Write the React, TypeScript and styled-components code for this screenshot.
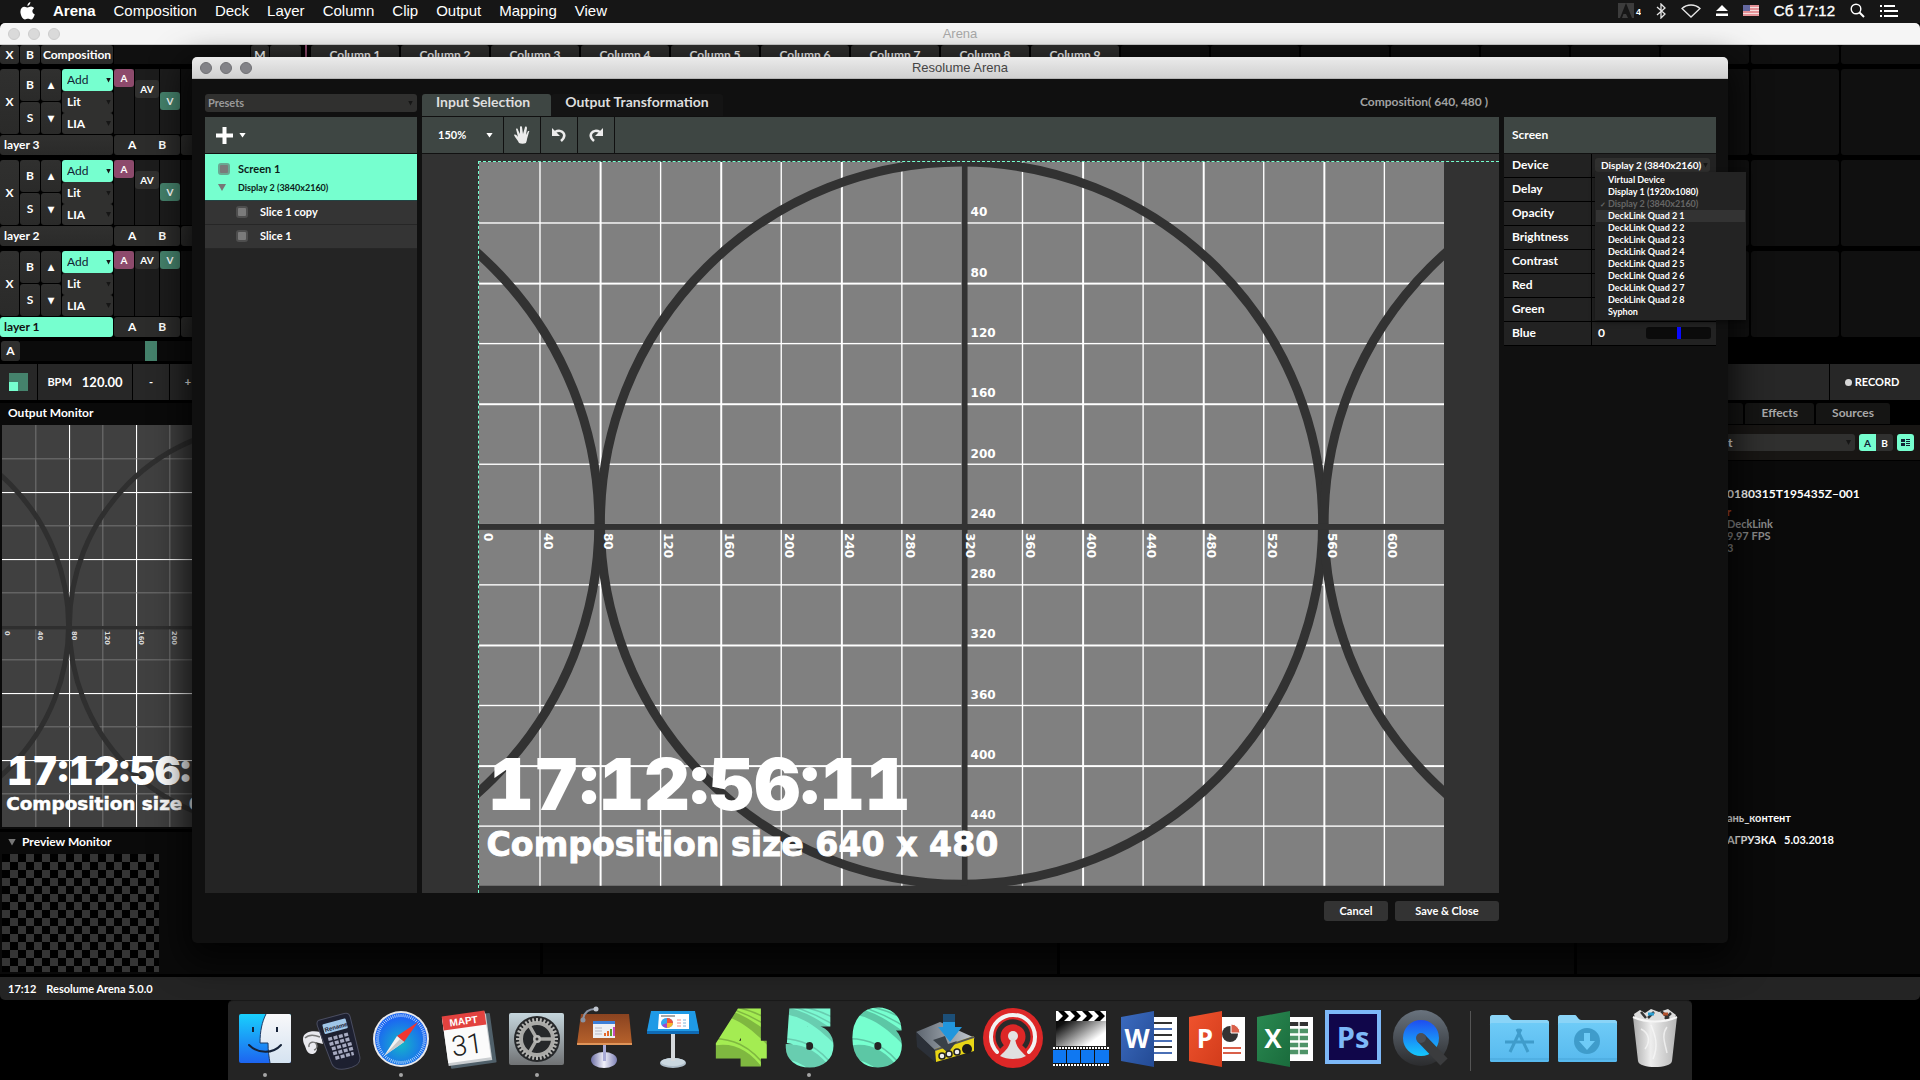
import React from "react";
import styled, { createGlobalStyle, css } from "styled-components";

const MINT = "#76ffcf";
const TEAL = "#45826c";
const PURPLE = "#8d4a6c";
const UI = `Lato, "Open Sans", "Noto Sans", sans-serif`;
const SYSTEM = `"Liberation Sans", Arial, sans-serif`;

const GlobalStyle = createGlobalStyle`
  * { box-sizing: border-box; }
  body { margin: 0; background: #000; }
  button, select, input { font: inherit; color: inherit; margin: 0; }
  ul { list-style: none; margin: 0; padding: 0; }
`;

/* ---------- desktop ---------- */

const Desktop = styled.div`
  position: relative;
  display: flex;
  flex-direction: column;
  height: 100vh;
  overflow: hidden;
  background: #000;
  color: #fff;
  font: 700 12px/16px ${UI};
  white-space: nowrap;
`;

const MenuBar = styled.nav`
  display: flex;
  align-items: center;
  justify-content: space-between;
  flex: none;
  height: 23px;
  padding: 0 22px 2px 20px;
  background: #161616;
  font: 400 15px/18px ${SYSTEM};
`;

const MenuGroup = styled.div<{ $gap: number }>`
  display: flex;
  align-items: center;
  gap: ${(p) => p.$gap}px;
`;

const MenuItem = styled.button<{ $bold?: boolean }>`
  padding: 0;
  border: 0;
  background: none;
  font-weight: ${(p) => (p.$bold ? 700 : 400)};
  line-height: 18px;
`;

const Clock = styled.span`
  font-size: 15px;
  -webkit-text-stroke: 0.4px #fff;
`;

const AppWindow = styled.section`
  display: flex;
  flex: 1;
  flex-direction: column;
  min-height: 0;
  overflow: hidden;
  border-radius: 5px;
  background: #000;
`;

const TitleBar = styled.header<{ $active?: boolean }>`
  display: grid;
  grid-template-columns: 1fr auto 1fr;
  align-items: center;
  flex: none;
  height: 22px;
  padding: 0 8px;
  border-bottom: 1px solid ${(p) => (p.$active ? "#b4b4b4" : "#cfcfcf")};
  background: ${(p) => (p.$active ? "linear-gradient(#ebebeb, #d0d0d0)" : "#f5f5f5")};
  color: ${(p) => (p.$active ? "#454545" : "#ababab")};
  font: 400 13px/18px ${SYSTEM};
`;

const Lights = styled.div`
  display: flex;
  gap: 8px;
`;

const Light = styled.button<{ $active?: boolean }>`
  width: 12px;
  height: 12px;
  padding: 0;
  border: 1px solid ${(p) => (p.$active ? "#707074" : "#cccccc")};
  border-radius: 50%;
  background: ${(p) => (p.$active ? "#838388" : "#dadada")};
`;

/* ---------- deck ---------- */

const Deck = styled.div`
  display: flex;
  flex: none;
  flex-direction: column;
  gap: 5px;
`;

const DeckRow = styled.div<{ $tall?: boolean }>`
  display: grid;
  grid-template-columns: 301px 10px minmax(0, 1fr);
  height: ${(p) => (p.$tall ? 86 : 19)}px;
`;

const PurpleRule = styled.div`
  width: 2px;
  margin-left: 4px;
  background: ${PURPLE};
`;

const ClipRow = styled.div`
  display: flex;
  gap: 2px;
  overflow: hidden;
`;

const ClipCell = styled.div<{ $head?: boolean }>`
  flex: none;
  width: 88px;
  border-radius: 3px;
  background: ${(p) => (p.$head ? "#30302f" : "#101010")};
  line-height: 19px;
  text-align: center;
`;

const HeadTools = styled.div`
  display: grid;
  grid-template-columns: 19px 20px 72px 136px 18px 31px;
  gap: 1px;
  background: #000;
`;

const flatButton = css`
  padding: 0;
  border: 0;
  border-radius: 3px;
  background: linear-gradient(#30302f, #2a2a29);
  line-height: 16px;
`;

const Key = styled.button<{ $left?: boolean; $on?: boolean }>`
  ${flatButton}
  padding-left: ${(p) => (p.$left ? 4 : 0)}px;
  text-align: ${(p) => (p.$left ? "left" : "center")};
  ${(p) => p.$on && css`background: ${MINT}; color: #111;`}
`;

const Blank = styled.div`
  background: #101010;
`;

const Layer = styled.div`
  display: grid;
  grid-template-rows: 65px 20px;
  gap: 1px;
`;

const LayerTop = styled.div`
  display: grid;
  grid-template-columns: 19px 20px 20px 51px 20px 24px 20px 1fr;
  gap: 1px;
  padding-right: 1px;
`;

const Stack = styled.div`
  display: grid;
  grid-auto-rows: 1fr;
  gap: 1px;
`;

const Blend = styled.div`
  display: grid;
  grid-template-rows: 22px 22px 21px;
`;

const SelectBox = styled.div<{ $tone?: "mint" | "grey" | "none" }>`
  display: grid;
  align-items: center;
  min-width: 0;
  border-radius: 3px;
  background: ${(p) => (p.$tone === "mint" ? MINT : "#30302f")};
  color: ${(p) => (p.$tone === "mint" ? "#123" : p.$tone === "grey" ? "#9a9a9a" : "#fff")};
  font-weight: ${(p) => (p.$tone === "mint" ? 400 : 700)};

  > * { grid-area: 1 / 1; }
`;

const Select = styled.select<{ $pad: number; $size?: number }>`
  width: 100%;
  height: 100%;
  padding: 0 0 0 ${(p) => p.$pad}px;
  border: 0;
  background: none;
  appearance: none;
  font-size: ${(p) => p.$size ?? 12}px;
  line-height: 14px;
`;

const Caret = styled.span<{ $light?: boolean; $edge?: number }>`
  justify-self: end;
  width: ${(p) => (p.$light ? 7 : 5)}px;
  height: 5px;
  margin-right: ${(p) => p.$edge ?? 2}px;
  background: ${(p) => (p.$light ? "#fff" : "#161616")};
  clip-path: polygon(0 0, 100% 0, 50% 100%);
  pointer-events: none;
`;

const Fader = styled.div<{ $drop: number }>`
  display: flex;
  flex-direction: column;
  padding-top: ${(p) => p.$drop}px;
  background: #1c1c1c;
`;

const Knob = styled.button<{ $color: string }>`
  height: 18px;
  padding: 0;
  border: 0;
  border-radius: 3px;
  background: ${(p) => p.$color};
  font-size: 10px;
`;

const LayerFoot = styled.div`
  display: grid;
  grid-template-columns: 113px 66px 1fr;
  gap: 1px;
`;

const CrossPair = styled.div`
  display: flex;
  justify-content: center;
  gap: 22px;
  border-radius: 3px;
  background: #2c2c2b;
`;

const PlainButton = styled.button`
  padding: 0;
  border: 0;
  background: none;
`;

const CrossRow = styled.div`
  display: grid;
  grid-template-columns: 19px 281px;
  height: 20px;
  margin: 4px 0 3px 1px;
`;

const CrossTrack = styled.div`
  padding-left: 125px;
  background: #0b0b0b;
`;

const CrossThumb = styled.div`
  width: 12px;
  height: 100%;
  background: ${TEAL};
`;

const Transport = styled.div`
  display: grid;
  grid-template-columns: 37px 94px 36px 36px 1fr 90px;
  gap: 1px;
  flex: none;
  height: 36px;
  margin-bottom: 3px;
`;

const TransportCell = styled.button`
  display: flex;
  align-items: center;
  justify-content: center;
  gap: 10px;
  padding: 0;
  border: 0;
  background: #272727;
  font-size: 11px;
`;

const BeatMark = styled.span`
  display: flex;
  align-items: flex-end;
  width: 19px;
  height: 18px;
  background: ${TEAL};

  &::before {
    content: "";
    width: 9px;
    height: 9px;
    background: ${MINT};
  }
`;

const Tempo = styled.span`
  font-size: 13px;
`;

const RecordLabel = styled.span`
  display: flex;
  align-items: center;
  gap: 3px;
  padding-right: 6px;

  &::before {
    content: "";
    width: 7px;
    height: 7px;
    border-radius: 50%;
    background: #d6d6d6;
  }
`;

/* ---------- lower panels ---------- */

const Lower = styled.div`
  display: grid;
  grid-template-columns: 540px 1fr 1fr 343px;
  gap: 3px;
  flex: 1;
  min-height: 0;
  margin-bottom: 3px;
`;

const Column = styled.div`
  display: flex;
  flex-direction: column;
  min-width: 0;
`;

const Panel = styled.section<{ $grow?: boolean }>`
  display: flex;
  flex-direction: column;
  flex: ${(p) => (p.$grow ? 1 : "none")};
  min-height: 0;
  margin-bottom: ${(p) => (p.$grow ? 0 : 3)}px;
  padding: 0 2px 2px;
  background: #0a0a0a;
`;

const PanelTitle = styled.h2`
  display: flex;
  align-items: center;
  gap: 6px;
  height: 22px;
  margin: 0;
  padding: 0 0 2px 6px;
  font-size: 12px;
`;

const Disclosure = styled.span`
  width: 8px;
  height: 7px;
  background: #777;
  clip-path: polygon(0 0, 100% 0, 50% 100%);
`;

const Checker = styled.div`
  width: 157px;
  height: 118px;
  background: conic-gradient(#353535 25%, #000 0 50%, #353535 0 75%, #000 0) 0 0 / 16px 16px;
`;

const Tabs = styled.div`
  display: flex;
  justify-content: flex-end;
  gap: 2px;
  height: 21px;
  margin-bottom: 1px;
  padding-right: 30px;
`;

const BrowserTab = styled.button<{ $hot?: boolean }>`
  padding: 0 ${(p) => (p.$hot ? 20 : 16)}px 1px;
  border: 0;
  border-radius: 3px 3px 0 0;
  background: #151514;
  color: ${(p) => (p.$hot ? "#c4502a" : "#a8a8a8")};
`;

const BrowserBar = styled.div`
  display: flex;
  align-items: center;
  gap: 4px;
  height: 36px;
  padding: 0 6px;
  border-bottom: 1px solid #000;
  background: #181614;
`;

const BrowserSelect = styled(SelectBox)`
  flex: 1;
  height: 17px;
`;

const Toggle = styled.div`
  display: flex;
  overflow: hidden;
  height: 17px;
  border-radius: 3px;
`;

const ToggleButton = styled.button<{ $on?: boolean }>`
  display: grid;
  place-items: center;
  width: 17px;
  padding: 0;
  border: 0;
  background: ${(p) => (p.$on ? MINT : "#30302f")};
  color: ${(p) => (p.$on ? "#123" : "#fff")};
  font-size: 10px;
`;

const FileList = styled.ul`
  display: flex;
  flex: 1;
  flex-direction: column;
  padding: 25px 0 0 150px;
  background: #0a0a0a;
`;

const FileName = styled.li`
  margin-bottom: 4px;
  font-size: 12px;
  line-height: 16px;
`;

const FileMeta = styled.li<{ $hot?: boolean }>`
  color: ${(p) => (p.$hot ? "#c4502a" : "#8a8a8a")};
  font-size: 11px;
  line-height: 12px;
`;

const FileGroup = styled.li`
  display: flex;
  flex-direction: column;
  gap: 6px;
  margin-top: 256px;
  font-size: 11px;
  line-height: 16px;
`;

const FileRow = styled.span`
  display: flex;
  gap: 8px;
`;

const StatusBar = styled.footer`
  display: flex;
  align-items: center;
  gap: 10px;
  flex: none;
  height: 23px;
  padding-left: 8px;
  background: #242424;
  font-size: 11px;
`;

/* ---------- output dialog ---------- */

const Dialog = styled.section`
  position: absolute;
  top: 57px;
  right: 10%;
  bottom: 137px;
  left: 10%;
  display: flex;
  flex-direction: column;
  border-radius: 5px;
  background: #101010;
  box-shadow: 0 12px 34px 6px rgba(0, 0, 0, 0.75);

  > header { border-radius: 5px 5px 0 0; }
`;

const DialogGrid = styled.div<{ $main?: boolean }>`
  display: grid;
  grid-template-columns: 212px minmax(0, 1fr) 212px;
  gap: 5px;
  flex: ${(p) => (p.$main ? 1 : "none")};
  min-height: 0;
  padding: ${(p) => (p.$main ? "15px 12px 0 13px" : "8px 12px 22px 13px")};
`;

const PresetBox = styled(SelectBox)`
  height: 18px;
  margin-bottom: 5px;
`;

const Toolbar = styled.div`
  display: flex;
  align-items: center;
  gap: 1px;
  flex: none;
  height: 37px;
  border-bottom: 1px solid #111;
  background: #3e4643;
`;

const ToolCell = styled.div<{ $width: number }>`
  display: grid;
  flex: none;
  width: ${(p) => p.$width}px;
  height: 36px;
  box-shadow: 1px 0 #101010;
`;

const ToolButton = styled.button`
  display: grid;
  place-items: center;
  padding: 0;
  border: 0;
  background: none;
`;

const AddButton = styled.button`
  display: flex;
  align-items: center;
  gap: 6px;
  padding: 0 0 0 11px;
  border: 0;
  background: none;
`;

const ZoomBox = styled(SelectBox)`
  background: none;
`;

const Tree = styled.div`
  flex: 1;
  background: #242424;
`;

const ScreenItem = styled.div`
  display: grid;
  grid-template-columns: 12px 1fr;
  align-items: center;
  column-gap: 8px;
  height: 47px;
  padding: 5px 13px 3px;
  border-bottom: 1px solid #244;
  background: ${MINT};
  color: #0c1c18;
  font-size: 11px;
`;

const SmallText = styled.span`
  font-size: 9px;
`;

const SliceItem = styled.div`
  display: flex;
  align-items: center;
  gap: 12px;
  height: 24px;
  padding: 0 0 2px 31px;
  border-bottom: 1px solid #262626;
  background: #343434;
  font-size: 11px;
`;

const Tick = styled.input`
  width: 12px;
  height: 12px;
  border: 2px solid #4e4e4e;
  border-radius: 3px;
  background: #7a7a7a;
  appearance: none;

  ${ScreenItem} & { border-color: #6aa892; }
`;

const DialogTabs = styled.div`
  display: flex;
  height: 23px;
  font-size: 14px;
`;

const DialogTab = styled.button<{ $on?: boolean }>`
  height: 22px;
  padding: 0 ${(p) => (p.$on ? 21 : 14)}px 6px 14px;
  border: 0;
  border-radius: 3px 3px 0 0;
  background: ${(p) => (p.$on ? "#3e4643" : "#141414")};
  color: #dedede;
`;

const SizeNote = styled.span`
  margin-left: auto;
  padding-right: 11px;
  color: #a2a2a2;
  font-size: 12px;
  line-height: 16px;
`;

const Canvas = styled.div`
  flex: 1;
  display: flex;
  min-height: 0;
  overflow: hidden;
  padding: 7px 0 0 56px;
  background: #323232;
`;

const Stage = styled.div`
  flex: 1;
  padding-right: 55px;
  border-top: 1px dashed ${MINT};
  border-left: 1px dashed ${MINT};
`;

const CardSvg = styled.svg`
  display: block;
  width: 100%;
  height: auto;
`;

const Timecode = styled.text`
  font-family: Inter, sans-serif;
  font-size: 47px;
  font-weight: 900;
  font-variant-numeric: tabular-nums;
`;

const Properties = styled.div`
  display: flex;
  flex-direction: column;
  padding-top: 23px;
`;

const PropertyTitle = styled.h2`
  margin: 0;
  padding-left: 8px;
  font-size: 12px;
`;

const PropertyRow = styled.div`
  display: grid;
  grid-template-columns: 87px 1fr;
  gap: 1px;
  height: 24px;
  border-bottom: 1px solid #000;
  background: #000;
`;

const PropertyLabel = styled.label`
  padding-left: 8px;
  background: #222;
  line-height: 21px;
`;

const PropertyValue = styled.div`
  position: relative;
  display: flex;
  align-items: center;
  justify-content: space-between;
  padding: 0 5px 1px 6px;
  background: #222;
`;

const DeviceBox = styled(SelectBox)`
  flex: 1;
  height: 14px;
  margin: 0 1px 0 -3px;
`;

const Popup = styled.ul`
  position: absolute;
  z-index: 2;
  top: 18px;
  left: 3px;
  width: 151px;
  padding: 2px 1px;
  background: #232323;
  box-shadow: 0 2px 5px rgba(0, 0, 0, 0.5);
`;

const Option = styled.li<{ $state?: "off" | "hover" }>`
  display: grid;
  grid-template-columns: 12px 1fr;
  height: 12px;
  background: ${(p) => (p.$state === "hover" ? "#333" : "none")};
  color: ${(p) => (p.$state === "off" ? "#666" : "#fff")};
  font-size: 9px;
  line-height: 12px;

  &::before {
    content: "${(p) => (p.$state === "off" ? "✓" : "")}";
    padding-left: 4px;
    font-size: 7px;
  }
`;

const Slider = styled.input`
  width: 65px;
  height: 12px;
  border-radius: 3px;
  background: #0b0b0b;
  appearance: none;

  &::-webkit-slider-thumb {
    width: 4px;
    height: 12px;
    background: #0a0aff;
    appearance: none;
  }
`;

const FooterButtons = styled.div`
  display: flex;
  grid-column: 2;
  justify-content: flex-end;
  gap: 7px;
`;

const FooterButton = styled.button<{ $wide?: boolean }>`
  ${flatButton}
  width: ${(p) => (p.$wide ? 104 : 64)}px;
  height: 20px;
  background: #333;
  font-size: 11px;
`;

/* ---------- dock ---------- */

const DockArea = styled.div`
  display: flex;
  flex: none;
  justify-content: center;
  height: 80px;
`;

const DockBar = styled.div`
  display: flex;
  padding: 4px 3px 0;
  border-top: 1px solid #1a1a1a;
  border-radius: 5px 5px 0 0;
  background: #242424;
`;

const DockItem = styled.button<{ $running?: boolean }>`
  display: flex;
  flex-direction: column;
  align-items: center;
  width: 68px;
  padding: 0;
  border: 0;
  background: none;

  > svg { flex: none; overflow: visible; }

  &::after {
    content: "";
    width: 4px;
    height: 4px;
    margin-top: 2px;
    border-radius: 50%;
    background: ${(p) => (p.$running ? "#a5a5a5" : "none")};
  }
`;

const DockRule = styled.div`
  width: 1px;
  height: 60px;
  margin: 6px 14px 0 15px;
  background: #555;
`;

/* ---------- test card ---------- */

function TestCard({ dim, label }: { dim?: boolean; label: string }) {
  const ink = dim ? "#2f2f2f" : "#323232";
  const xs = Array.from({ length: 15 }, (_, i) => (i + 1) * 40);
  const ys = Array.from({ length: 11 }, (_, i) => (i + 1) * 40);
  const line = (v: number) => (dim && v % 80 ? "#868686" : "#fff");
  return (
    <CardSvg viewBox="0 0 640 480" role="img" aria-label={label} fill="#fff" fontFamily="DejaVu Sans, sans-serif" fontWeight={700}>
      <rect width="640" height="480" fill={dim ? "#404040" : "#808080"} />
      {xs.map((x) => <rect key={x} x={x} width={x % 80 ? 0.9 : 1.3} height="480" fill={line(x)} />)}
      {ys.map((y) => <rect key={y} y={y} width="640" height={y % 80 ? 0.9 : 1.3} fill={line(y)} />)}
      <g fill="none" stroke={ink} strokeWidth="6">
        <circle cx="320" cy="239.5" r="239.5" />
        <circle cx="-160" cy="239.5" r="239.5" />
        <circle cx="800" cy="239.5" r="239.5" />
      </g>
      <rect y="240" width="640" height="4" fill={ink} />
      <rect x="320" width="4" height="480" fill={ink} />
      <g fontSize="8" fill={dim ? "#ddd" : "#fff"}>
        {ys.map((y) => <text key={y} x="326" y={y - 4}>{y}</text>)}
        {[0, ...xs].map((x) => (
          <text key={x} transform={`translate(${x + 3} 246) rotate(90)`}>{x}</text>
        ))}
      </g>
      <Timecode x="6" y="430">17:12:56:11</Timecode>
      <text x="5" y="460" fontSize="22" stroke="#fff" strokeWidth=".6">Composition size 640 x 480</text>
    </CardSvg>
  );
}

/* ---------- dock icons ---------- */

const icon = (body: React.ReactNode) => (
  <svg width="68" height="66" viewBox="0 0 68 66">{body}</svg>
);

const tickMarks = (n: number, r1: number, r2: number, cx: number, cy: number) =>
  Array.from({ length: n }, (_, i) => {
    const a = (i * 2 * Math.PI) / n;
    return `M${cx + r1 * Math.cos(a)} ${cy + r1 * Math.sin(a)}L${cx + r2 * Math.cos(a)} ${cy + r2 * Math.sin(a)}`;
  }).join("");

const finder = icon(
  <>
    <defs>
      <linearGradient id="fL" x2="0" y2="1"><stop stopColor="#19d0fd" /><stop offset="1" stopColor="#1d64f0" /></linearGradient>
      <linearGradient id="fR" x2="0" y2="1"><stop stopColor="#f8f8fa" /><stop offset="1" stopColor="#d5e3f1" /></linearGradient>
    </defs>
    <rect x="8" y="9" width="52" height="49" rx="2" fill="url(#fL)" />
    <path d="M35 9h23a2 2 0 0 1 2 2v45a2 2 0 0 1-2 2H39c-1-6-2-12-2-20h-8c0-12 2-21 6-29z" fill="url(#fR)" />
    <path d="M35 9c-4 8-6 17-6 29h8c0 8 1 14 2 20" fill="none" stroke="#1c3a66" strokeWidth="1" />
    <path d="M22 22v5M46 22v5" stroke="#152238" strokeWidth="2" />
    <path d="M18 40c9 9 24 9 32 0" fill="none" stroke="#152238" strokeWidth="2" strokeLinecap="round" />
  </>
);

const calculator = icon(
  <>
    <path d="M4 34c0-7 9-9 17-7l3 12-8-2c3 4 3 11-2 12-6 1-7-6-8-8-1-2-2-4-2-7z" fill="#e9e9ee" />
    <path d="M6 33c4-4 10-3 15-1M10 42a4 4 0 1 1 5 3" fill="none" stroke="#777" strokeWidth="1.5" />
    <g transform="rotate(-15 39 36)">
      <path d="M26 11h26c4 0 5 2 5 5l-1 40c0 7-5 9-14 9s-14-3-15-9l-4-40c0-3 1-5 3-5z" fill="#1d2030" stroke="#4a4d60" />
      <rect x="28" y="16" width="24" height="10" rx="1" fill="#9fc6e8" />
      <text x="29" y="24" fontFamily="Liberation Sans" fontSize="6" fill="#223">Rename</text>
      <path d="M30 32h22M30 37h22M31 42h21M31 47h21M32 52h19" stroke="#a6aac0" strokeWidth="3.4" strokeDasharray="4 1.5" />
    </g>
  </>
);

const safari = icon(
  <>
    <defs><radialGradient id="sf" cy=".6"><stop stopColor="#14b5c9" /><stop offset="1" stopColor="#1c66f2" /></radialGradient></defs>
    <circle cx="34" cy="34" r="28" fill="#e8e8ea" />
    <circle cx="34" cy="34" r="26" fill="url(#sf)" />
    <path d={tickMarks(72, 22, 25, 34, 34)} stroke="#cfe6ff" strokeWidth=".8" />
    <path d="M51 17L30 31l7 6z" fill="#f0362f" />
    <path d="M17 51l13-20 7 6z" fill="#f2f2f2" />
    <path d="M17 51l16-17 4 3z" fill="#c9c9c9" />
  </>
);

const calendar = icon(
  <g transform="rotate(-8 34 33)">
    <rect x="12" y="11" width="46" height="50" rx="1" fill="#50606a" />
    <rect x="10" y="11" width="44" height="47" fill="#c9cdd0" />
    <rect x="10" y="9" width="43" height="46" fill="#fbfbfb" />
    <rect x="10" y="8" width="43" height="14" fill="#e2423f" />
    <text x="31" y="19" textAnchor="middle" fontFamily="Liberation Sans" fontSize="10" fill="#fff">МАРТ</text>
    <text x="31" y="49" textAnchor="middle" fontFamily="Roboto, sans-serif" fontWeight="300" fontSize="28" fill="#222">31</text>
  </g>
);

const settings = icon(
  <>
    <defs><linearGradient id="st" x2="0" y2="1"><stop stopColor="#c5d6dd" /><stop offset="1" stopColor="#707274" /></linearGradient></defs>
    <rect x="6" y="8" width="55" height="52" rx="2" fill="url(#st)" />
    <circle cx="34" cy="34" r="23" fill="#26282a" />
    <circle cx="34" cy="34" r="16" fill="none" stroke="#a9a9a6" strokeWidth="4" />
    <path d={tickMarks(32, 17, 21, 34, 34)} stroke="#b5b5b2" strokeWidth="2" />
    <path d="M34 34L26 20M34 34h17M34 34L26 48" stroke="#a9a9a6" strokeWidth="3.5" />
    <circle cx="34" cy="34" r="4" fill="#b9b9b6" />
    <circle cx="34" cy="34" r="1.5" fill="#333" />
  </>
);

const lectern = icon(
  <>
    <defs>
      <linearGradient id="wd" x2="0" y2="1"><stop stopColor="#8a4320" /><stop offset="1" stopColor="#b7622c" /></linearGradient>
      <linearGradient id="bs"><stop stopColor="#6d6fa5" /><stop offset=".5" stopColor="#f2f2fb" /><stop offset="1" stopColor="#7d80b5" /></linearGradient>
    </defs>
    <ellipse cx="33" cy="55" rx="13" ry="8" fill="url(#bs)" />
    <path d="M32 40h3v16h-3z" fill="#a9abd8" />
    <path d="M10 9h48l3 30H6z" fill="url(#wd)" />
    <path d="M6 38h55v2H6z" fill="#e0955a" />
    <path d="M22 16h22v17H22z" fill="#eef0f4" /><path d="M22 16h22v3H22z" fill="#3d7fd8" />
    <path d="M24 23h7M24 26h7M24 29h7" stroke="#b9b9c4" />
    <path d="M34 31v-3M37 31v-5" stroke="#e66a2c" strokeWidth="2" />
    <path d="M40 31v-7" stroke="#5aa02c" strokeWidth="2" />
    <path d="M43 31v-9" stroke="#c54bb8" strokeWidth="2" />
    <path d="M12 15C13 7 18 4 24 4" fill="none" stroke="#8a93a3" strokeWidth="2" />
    <circle cx="12" cy="15" r="2.5" fill="#8a93a3" /><circle cx="25" cy="4" r="2.5" fill="#c0c6d0" />
  </>
);

const podium = icon(
  <>
    <ellipse cx="34" cy="58" rx="13" ry="5" fill="#aebdc9" /><ellipse cx="34" cy="57" rx="12" ry="4" fill="#cbd8e0" />
    <path d="M32 28h4v28h-4z" fill="#d5d9dc" />
    <path d="M12 6h44l4 20H8z" fill="#1f9ae6" /><path d="M8 26h52v3H8z" fill="#0f6bb5" />
    <path d="M20 9h30v15H19z" fill="#fff" />
    <path d="M22 11h14" stroke="#555" />
    <ellipse cx="28" cy="18" rx="6" ry="5" fill="#34a8ef" /><path d="M28 18v-5a6 5 0 0 1 6 5z" fill="#f0523d" /><path d="M28 18h6a6 5 0 0 1-6 5z" fill="#f7b52c" /><path d="M28 18v5a6 5 0 0 1-5-3z" fill="#a548c8" />
    <path d="M38 15h4M38 18h4M38 21h4" stroke="#f08a8a" /><path d="M44 15h3M44 18h3M44 21h3" stroke="#7fb4dd" />
  </>
);

const Numeral = ({ n, a, b }: { n: string; a: string; b: string }) =>
  icon(
    <>
      <defs>
        <pattern id={`num${n}`} width="68" height="66" patternUnits="userSpaceOnUse">
          <rect width="68" height="66" fill={a} />
          <path d="M0 8c26 2 40 10 68 40v-16C44 14 28 4 0 0zM0 42c24-6 40 0 58 24H36C24 56 12 52 0 56z" fill={b} />
          <path d="M12 0c20 5 36 12 56 26M20 0c18 3 32 8 48 18M0 34c24-2 44 6 62 32" fill="none" stroke={b} strokeWidth="1.4" />
        </pattern>
      </defs>
      <text x="34" y="58" textAnchor="middle" fontFamily="Inter, sans-serif" fontWeight="900" fontSize="70" fill={`url(#num${n})`} stroke={`url(#num${n})`} strokeWidth="7">{n}</text>
    </>
  );

const drive = icon(
  <>
    <defs><linearGradient id="dr"><stop stopColor="#5d656f" /><stop offset="1" stopColor="#c4cbd2" /></linearGradient></defs>
    <path d="M5 27l24-10 35 16-40 13z" fill="url(#dr)" /><path d="M5 27l19 18v12L6 42z" fill="#2b3038" />
    <path d="M24 44l39-13v15L25 57z" fill="#e8d516" /><path d="M24 44l39-13v2L24 46z" fill="#555" />
    <path d="M22 35l12-4 3 8 9-3-9 12z" fill="#3a4148" />
    <g fill="#eee" stroke="#222" strokeWidth="1.5"><circle cx="31" cy="51" r="3" /><circle cx="38" cy="49" r="3" /><circle cx="46" cy="47" r="3" /></g>
    <circle cx="56" cy="44" r="5" fill="#1b1b1b" />
    <path d="M32 9h12v13h7L39 37 27 22h5z" fill="#2196dd" /><path d="M32 9h12v8H32z" fill="#1c4f78" />
  </>
);

const broadcast = icon(
  <>
    <circle cx="34" cy="33" r="30" fill="#dd2727" />
    <path d="M18 47a22 22 0 1 1 32 0" fill="none" stroke="#f2f2f2" strokeWidth="4" strokeLinecap="round" />
    <path d="M23 42a15 15 0 1 1 22 0" fill="none" stroke="#2b2b2b" strokeWidth="5" />
    <circle cx="34" cy="33" r="9" fill="#dd2727" /><circle cx="34" cy="31" r="5" fill="#e4e4e4" />
    <path d="M32 33h4c1 9 5 12 11 18-7 4-19 4-26 0 6-6 10-9 11-18z" fill="#e0e0e0" />
  </>
);

const clapper = icon(
  <>
    <defs><linearGradient id="cl" y2="1"><stop stopColor="#000" /><stop offset=".25" stopColor="#111" /><stop offset=".8" stopColor="#fff" /></linearGradient></defs>
    <rect x="9" y="6" width="50" height="35" fill="url(#cl)" /><path d="M9 6h50v10H9z" fill="#fff" />
    <path d="M11 6h6l5 5-5 5h-6l5-5zM23 6h6l5 5-5 5h-6l5-5zM35 6h6l5 5-5 5h-6l5-5zM47 6h6l5 5-5 5h-6l5-5z" fill="#000" />
    <rect x="6" y="42" width="56" height="19" fill="#111" /><path d="M6 43h56M6 60h56" stroke="#fff" strokeWidth="2" strokeDasharray="2 1" />
    <path d="M6 45h13v13H6zM20 45h13v13H20zM34 45h13v13H34zM48 45h14v13H48z" fill="#0f78f2" />
  </>
);

const office = (letter: string, c1: string, c2: string, page: React.ReactNode) =>
  icon(
    <>
      <defs><linearGradient id={`of${letter}`} x2="1" y2="1"><stop stopColor={c1} /><stop offset="1" stopColor={c2} /></linearGradient></defs>
      <rect x="36" y="12" width="26" height="44" fill="#fff" />
      {page}
      <path d="M6 12l33-6v56L6 56z" fill={`url(#of${letter})`} />
      <text x="22" y="43" textAnchor="middle" fontFamily="Open Sans, sans-serif" fontWeight="700" fontSize="26" fill="#fff">{letter}</text>
    </>
  );

const word = office("W", "#3c6cc0", "#234a94",
  <><path d="M39 18h18M39 30h18M39 42h18" stroke="#333" strokeWidth="2" /><path d="M39 24h18M39 36h18M39 48h18" stroke="#4a6fb5" strokeWidth="2" /></>);
const powerpoint = office("P", "#f0532e", "#d23c1b",
  <><circle cx="47" cy="29" r="8" fill="#333" /><path d="M48 28v-9a9 9 0 0 1 9 9z" fill="#d9604a" stroke="#fff" /><path d="M40 43h18M40 48h18" stroke="#d9604a" strokeWidth="2" /></>);
const excel = office("X", "#2a8a52", "#1a6b3c",
  <><path d="M39 19h18" stroke="#333" strokeWidth="4" /><path d="M39 26h18M39 33h18M39 40h18M39 47h18" stroke="#4f9468" strokeWidth="4.5" /><path d="M48 14v38" stroke="#fff" strokeWidth="1.5" /></>);

const photoshop = icon(
  <>
    <rect x="6" y="5" width="56" height="54" fill="#7db8f8" /><rect x="10" y="9" width="48" height="46" fill="#10064a" />
    <text x="34" y="43" textAnchor="middle" fontFamily="Open Sans, sans-serif" fontWeight="700" fontSize="29" fill="#7db8f8">Ps</text>
  </>
);

const quicktime = icon(
  <>
    <defs>
      <linearGradient id="qr" x2="0" y2="1"><stop stopColor="#69737e" /><stop offset="1" stopColor="#2b2c2e" /></linearGradient>
      <linearGradient id="qb" x2="0" y2="1"><stop stopColor="#1f4df0" /><stop offset="1" stopColor="#15c9fd" /></linearGradient>
    </defs>
    <circle cx="34" cy="33" r="28" fill="url(#qr)" /><circle cx="34" cy="33" r="18" fill="url(#qb)" />
    <path d="M34 33l23 24" stroke="#3b3c3e" strokeWidth="10" /><circle cx="34" cy="33" r="5" fill="#4b4f57" />
  </>
);

const folder = (glyph: React.ReactNode, id: string) =>
  icon(
    <>
      <defs><linearGradient id={id} x2="0" y2="1"><stop stopColor="#6ecbf7" /><stop offset="1" stopColor="#57b9ee" /></linearGradient></defs>
      <path d="M5 12c0-1 1-2 2-2h15c2 0 3 5 6 5h34c1 0 2 1 2 2v8H5z" fill="#8ad4f7" />
      <rect x="5" y="18" width="59" height="39" rx="1.5" fill={`url(#${id})`} />
      <path d="M5 54h59" stroke="#48a5d8" />
      {glyph}
    </>
  );
const folderApps = folder(
  <path d="M20 37h29M25 47l11-23M43 47L32 24" fill="none" stroke="#3f9ccb" strokeWidth="3" />, "fa");
const folderDown = folder(
  <><circle cx="34" cy="36" r="13" fill="#3f9ccb" /><path d="M31 28h6v8h5l-8 9-8-9h5z" fill="#6ecbf7" /></>, "fd");

const trash = icon(
  <>
    <defs><linearGradient id="tr"><stop stopColor="#aaa" /><stop offset=".4" stopColor="#eee" /><stop offset="1" stopColor="#b5b5b5" /></linearGradient></defs>
    <path d="M13 9l6-4 5 3 6-4 8 3 9-3 8 6-3 7H15z" fill="#ddd" />
    <path d="M20 7l5 6M33 7l-6 6M40 6l8 8M50 8l-6 6" stroke="#333" strokeWidth="2.5" /><path d="M27 9h6" stroke="#2a9dd0" strokeWidth="3" /><path d="M42 9h5" stroke="#b2502c" strokeWidth="3" />
    <path d="M12 12c13 6 31 6 44 0l-5 44c-1 8-33 8-34 0z" fill="url(#tr)" />
    <path d="M12 12c13 6 31 6 44 0" fill="none" stroke="#f6f6f6" strokeWidth="2" />
    <path d="M20 24c8 4 10 12 4 20M46 22c-6 8-2 16 0 26M30 20c4 10 8 20 2 34" fill="none" stroke="#fafafa" strokeWidth="1.5" opacity=".7" />
  </>
);

const dockApps: { name: string; art: React.ReactNode; running?: boolean }[] = [
  { name: "Finder", art: finder, running: true },
  { name: "Rename", art: calculator },
  { name: "Safari", art: safari, running: true },
  { name: "Calendar", art: calendar },
  { name: "System Preferences", art: settings, running: true },
  { name: "Keynote '09", art: lectern },
  { name: "Keynote", art: podium },
  { name: "Arena 4", art: <Numeral n="4" a="#a4ec52" b="#7fb840" /> },
  { name: "Arena 5", art: <Numeral n="5" a="#7cf8d2" b="#68cdb0" />, running: true },
  { name: "Arena 6", art: <Numeral n="6" a="#76ffcf" b="#5cc7a5" /> },
  { name: "Media Express", art: drive },
  { name: "Broadcast", art: broadcast },
  { name: "Clips", art: clapper },
  { name: "Word", art: word },
  { name: "PowerPoint", art: powerpoint },
  { name: "Excel", art: excel },
  { name: "Photoshop", art: photoshop },
  { name: "QuickTime", art: quicktime },
];

const dockFolders = [
  { name: "Applications", art: folderApps },
  { name: "Downloads", art: folderDown },
  { name: "Trash", art: trash },
];

/* ---------- data ---------- */

const layers = [
  { name: "layer 3", drops: [0, 11, 23] },
  { name: "layer 2", drops: [0, 11, 23] },
  { name: "layer 1", drops: [0, 0, 0], on: true },
];

const devices: { name: string; state?: "off" | "hover" }[] = [
  { name: "Virtual Device" },
  { name: "Display 1 (1920x1080)" },
  { name: "Display 2 (3840x2160)", state: "off" },
  { name: "DeckLink Quad 2 1", state: "hover" },
  ...[2, 3, 4, 5, 6, 7, 8].map((n) => ({ name: `DeckLink Quad 2 ${n}` })),
  { name: "Syphon" },
];

const clipColumns = Array.from({ length: 18 }, (_, i) => i);

function TrafficLights({ active }: { active?: boolean }) {
  return (
    <Lights>
      {["Close", "Minimize", "Zoom"].map((n) => <Light key={n} $active={active} aria-label={n} />)}
    </Lights>
  );
}

function TopMenu() {
  return (
    <MenuBar>
      <MenuGroup $gap={18}>
        <svg width="15" height="18" viewBox="0 0 15 18" fill="#fff">
          <path d="M10.4 0c.1 1.800-1.200 3.800-3 4C7.200 2.200 8.800.3 10.400 0zM11 4.600c1.300 0 2.500.8 3.100 1.700-2.500 1.500-2.200 5 .7 6.100C14 14.800 12.500 17.500 11 17.500c-1.200 0-1.600-.7-3-.7s-1.900.7-3 .7C2.800 17.500.4 13 .4 9.700c0-3.200 2-5 4-5 1.400 0 2.500.9 3.300.9.800 0 2-1 3.300-1z" />
        </svg>
        <MenuItem $bold>Arena</MenuItem>
        {["Composition", "Deck", "Layer", "Column", "Clip", "Output", "Mapping", "View"].map((m) => (
          <MenuItem key={m}>{m}</MenuItem>
        ))}
      </MenuGroup>
      <MenuGroup $gap={15}>
        <svg width="23" height="15" viewBox="0 0 23 15">
          <rect width="16" height="15" fill="#3c3c3c" /><path d="M8 0l6 15h-4l-2-4H5L8 4 4 15H2z" fill="#161616" />
          <text x="18" y="12" fontFamily="Liberation Sans" fontWeight="700" fontSize="9" fill="#fff">4</text>
        </svg>
        <svg width="10" height="16" viewBox="0 0 10 16" fill="none" stroke="#e6e6e6" strokeWidth="1.3"><path d="M1 4l8 7-4 4V1l4 4-8 7" /></svg>
        <svg width="20" height="14" viewBox="0 0 20 14" fill="none" stroke="#e6e6e6" strokeWidth="1.3"><path d="M1 4.500C6-.2 14-.2 19 4.500L10 13z" /></svg>
        <svg width="12" height="11" viewBox="0 0 12 11" fill="#fff"><path d="M6 0l6 6H0zM0 8.500h12V11H0z" /></svg>
        <svg width="16" height="11" viewBox="0 0 16 11">
          <rect width="16" height="11" fill="#f6dede" /><path d="M0 1h16M0 4h16M0 7h16M0 10h16" stroke="#e07a80" strokeWidth="1.5" /><rect width="7" height="6" fill="#6468a0" />
        </svg>
        <Clock>Сб 17:12</Clock>
        <svg width="15" height="15" viewBox="0 0 15 15" fill="none" stroke="#fff" strokeWidth="1.400"><circle cx="6" cy="6" r="4.800" /><path d="M9.500 9.500L14 14" strokeWidth="2" /></svg>
        <svg width="18" height="12" viewBox="0 0 18 12" stroke="#fff" strokeWidth="2"><path d="M0 1h2M4 1h11M0 6h2M4 6h14M0 11h2M4 11h14" /></svg>
      </MenuGroup>
    </MenuBar>
  );
}

function LayerRow({ name, drops, on }: { name: string; drops: number[]; on?: boolean }) {
  return (
    <DeckRow $tall>
      <Layer>
        <LayerTop>
          <Key>X</Key>
          <Stack><Key>B</Key><Key>S</Key></Stack>
          <Stack><Key>▴</Key><Key>▾</Key></Stack>
          <Blend>
            {["Add", "Lit", "LIA"].map((mode, i) => (
              <SelectBox key={mode} $tone={i === 0 ? "mint" : "none"}>
                <Select $pad={5} aria-label={`${name} ${mode}`}><option>{mode}</option></Select>
                <Caret />
              </SelectBox>
            ))}
          </Blend>
          <Fader $drop={drops[0]}><Knob $color={PURPLE}>A</Knob></Fader>
          <Fader $drop={drops[1]}><Knob $color="#30302f">AV</Knob></Fader>
          <Fader $drop={drops[2]}><Knob $color={TEAL}>V</Knob></Fader>
          <Blank />
        </LayerTop>
        <LayerFoot>
          <Key $left $on={on}>{name}</Key>
          <CrossPair><PlainButton>A</PlainButton><PlainButton>B</PlainButton></CrossPair>
          <Key />
        </LayerFoot>
      </Layer>
      <span />
      <ClipRow>{clipColumns.map((c) => <ClipCell key={c} />)}</ClipRow>
    </DeckRow>
  );
}

function DeckArea() {
  return (
    <Deck>
      <DeckRow>
        <HeadTools>
          <Key>X</Key><Key>B</Key><Key>Composition</Key><Blank /><Key>M</Key><Key />
        </HeadTools>
        <PurpleRule />
        <ClipRow>
          {clipColumns.map((c) => (
            <ClipCell key={c} $head={c < 9}>{c < 9 ? `Column ${c + 1}` : ""}</ClipCell>
          ))}
        </ClipRow>
      </DeckRow>
      {layers.map((l) => <LayerRow key={l.name} {...l} />)}
    </Deck>
  );
}

function Browser() {
  return (
    <Column>
      <Tabs>
        <BrowserTab $hot>Files</BrowserTab>
        <BrowserTab>Effects</BrowserTab>
        <BrowserTab>Sources</BrowserTab>
      </Tabs>
      <BrowserBar>
        <BrowserSelect $tone="none">
          <Select $pad={145} aria-label="Location"><option>t</option></Select>
          <Caret $edge={4} />
        </BrowserSelect>
        <Toggle>
          <ToggleButton $on>A</ToggleButton>
          <ToggleButton>B</ToggleButton>
        </Toggle>
        <Toggle>
          <ToggleButton $on aria-label="List view">
            <svg width="9" height="7" viewBox="0 0 9 7" fill="#123"><path d="M0 0h4v3H0zM5 0h4v1H5zM5 2h4v1H5zM0 4h4v3H0zM5 4h4v1H5zM5 6h4v1H5z" /></svg>
          </ToggleButton>
        </Toggle>
      </BrowserBar>
      <FileList>
        <FileName>0180315T195435Z–001</FileName>
        <FileMeta $hot>r</FileMeta>
        <FileMeta>DeckLink</FileMeta>
        <FileMeta>9.97 FPS</FileMeta>
        <FileMeta>3</FileMeta>
        <FileGroup>
          <span>ань_контент</span>
          <FileRow><span>АГРУЗКА</span><span>5.03.2018</span></FileRow>
        </FileGroup>
      </FileList>
    </Column>
  );
}

function OutputDialog() {
  return (
    <Dialog role="dialog" aria-label="Resolume Arena">
      <TitleBar $active><TrafficLights active /><span>Resolume Arena</span><span /></TitleBar>
      <DialogGrid $main>
        <Column>
          <PresetBox $tone="grey">
            <Select $pad={3} $size={11} aria-label="Presets"><option>Presets</option></Select>
            <Caret $edge={4} />
          </PresetBox>
          <Toolbar>
            <AddButton aria-label="Add screen">
              <svg width="17" height="17" viewBox="0 0 17 17" fill="#fff"><path d="M6.500 0h4v6.500H17v4h-6.500V17h-4v-6.500H0v-4h6.500z" /></svg>
              <Caret $light />
            </AddButton>
          </Toolbar>
          <Tree>
            <ScreenItem>
              <Tick type="checkbox" id="screen1" />
              <label htmlFor="screen1">Screen 1</label>
              <Disclosure />
              <SmallText>Display 2 (3840x2160)</SmallText>
            </ScreenItem>
            {["Slice 1 copy", "Slice 1"].map((s) => (
              <SliceItem key={s}>
                <Tick type="checkbox" id={s} />
                <label htmlFor={s}>{s}</label>
              </SliceItem>
            ))}
          </Tree>
        </Column>

        <Column>
          <DialogTabs>
            <DialogTab $on>Input Selection</DialogTab>
            <DialogTab>Output Transformation</DialogTab>
            <SizeNote>Composition( 640, 480 )</SizeNote>
          </DialogTabs>
          <Toolbar>
            <ToolCell $width={81}>
              <ZoomBox $tone="none">
                <Select $pad={16} $size={11} aria-label="Zoom"><option>150%</option></Select>
                <Caret $light $edge={10} />
              </ZoomBox>
            </ToolCell>
            <ToolCell $width={36}>
              <ToolButton aria-label="Pan">
                <svg width="16" height="18" viewBox="0 0 16 18" fill="#ececec"><path d="M5 17c-1-3-4-5-5-8 1-1 3 0 4 2L2 3c1-1 2 0 2 1l2 4V1c0-1 2-1 2 0l1 7 2-7c1-1 2 0 2 1l-1 7 2-4c1 0 2 0 1 1l-2 7c0 2-1 3-1 4-2 1-5 1-7 0z" /></svg>
              </ToolButton>
            </ToolCell>
            <ToolCell $width={36}>
              <ToolButton aria-label="Undo">
                <svg width="16" height="16" viewBox="0 0 16 16"><path d="M4 5c7-4 13 3 6 9" fill="none" stroke="#ececec" strokeWidth="2.500" /><path d="M1 1v8h8z" fill="#ececec" /></svg>
              </ToolButton>
            </ToolCell>
            <ToolCell $width={36}>
              <ToolButton aria-label="Redo">
                <svg width="16" height="16" viewBox="0 0 16 16"><path d="M12 5C5 1-1 8 6 14" fill="none" stroke="#ececec" strokeWidth="2.500" /><path d="M15 1v8H7z" fill="#ececec" /></svg>
              </ToolButton>
            </ToolCell>
          </Toolbar>
          <Canvas><Stage><TestCard label="Input canvas" /></Stage></Canvas>
        </Column>

        <Properties>
          <Toolbar><PropertyTitle>Screen</PropertyTitle></Toolbar>
          <PropertyRow>
            <PropertyLabel htmlFor="device">Device</PropertyLabel>
            <PropertyValue>
              <DeviceBox $tone="none">
                <Select id="device" $pad={6} $size={10}><option>Display 2 (3840x2160)</option></Select>
                <Caret />
              </DeviceBox>
              <Popup role="listbox" aria-label="Device">
                {devices.map((d) => <Option key={d.name} role="option" $state={d.state}>{d.name}</Option>)}
              </Popup>
            </PropertyValue>
          </PropertyRow>
          {["Delay", "Opacity", "Brightness", "Contrast", "Red", "Green"].map((p) => (
            <PropertyRow key={p}>
              <PropertyLabel as="span">{p}</PropertyLabel>
              <PropertyValue />
            </PropertyRow>
          ))}
          <PropertyRow>
            <PropertyLabel htmlFor="blue">Blue</PropertyLabel>
            <PropertyValue>
              <span>0</span>
              <Slider id="blue" type="range" min={-50} max={50} defaultValue={0} />
            </PropertyValue>
          </PropertyRow>
        </Properties>
      </DialogGrid>
      <DialogGrid>
        <FooterButtons>
          <FooterButton>Cancel</FooterButton>
          <FooterButton $wide>Save &amp; Close</FooterButton>
        </FooterButtons>
      </DialogGrid>
    </Dialog>
  );
}

export default function App() {
  return (
    <>
      <GlobalStyle />
      <Desktop>
        <TopMenu />
        <AppWindow>
          <TitleBar><TrafficLights /><span>Arena</span><span /></TitleBar>
          <DeckArea />
          <CrossRow><Key>A</Key><CrossTrack><CrossThumb /></CrossTrack></CrossRow>
          <Transport>
            <TransportCell aria-label="Beat"><BeatMark /></TransportCell>
            <TransportCell>BPM <Tempo>120.00</Tempo></TransportCell>
            <TransportCell>-</TransportCell>
            <TransportCell>+</TransportCell>
            <TransportCell />
            <TransportCell><RecordLabel>RECORD</RecordLabel></TransportCell>
          </Transport>
          <Lower>
            <Column>
              <Panel>
                <PanelTitle>Output Monitor</PanelTitle>
                <TestCard dim label="Output monitor" />
              </Panel>
              <Panel $grow>
                <PanelTitle><Disclosure />Preview Monitor</PanelTitle>
                <Checker />
              </Panel>
            </Column>
            <Panel $grow />
            <Panel $grow />
            <Browser />
          </Lower>
          <StatusBar><span>17:12</span><span>Resolume Arena 5.0.0</span></StatusBar>
        </AppWindow>
        <DockArea>
          <DockBar>
            {dockApps.map((a) => (
              <DockItem key={a.name} $running={a.running} aria-label={a.name}>{a.art}</DockItem>
            ))}
            <DockRule />
            {dockFolders.map((a) => <DockItem key={a.name} aria-label={a.name}>{a.art}</DockItem>)}
          </DockBar>
        </DockArea>
        <OutputDialog />
      </Desktop>
    </>
  );
}
